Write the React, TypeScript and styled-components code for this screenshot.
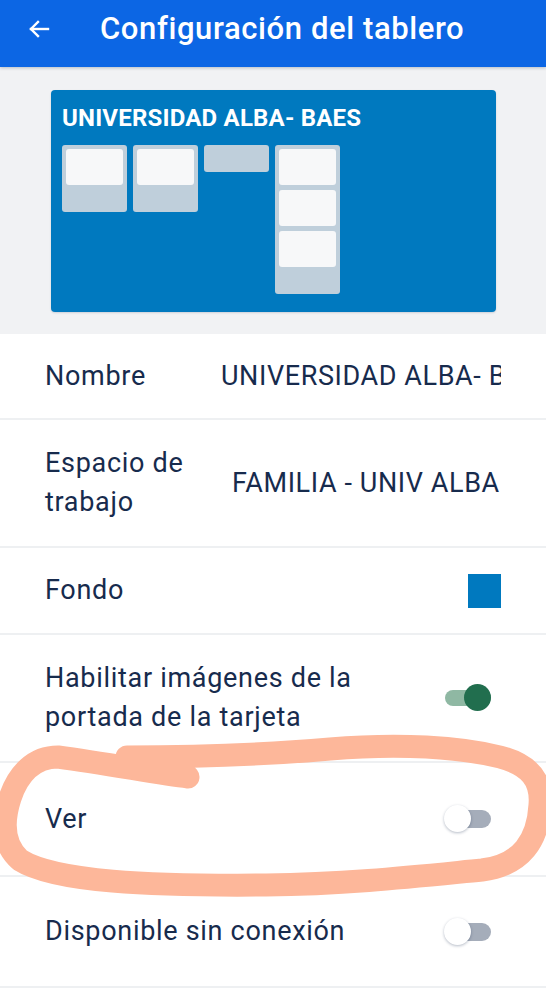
import styled, { createGlobalStyle } from 'styled-components'

const GlobalStyle = createGlobalStyle`
  html, body {
    margin: 0;
    padding: 0;
    background: #ffffff;
    font-family: Roboto, "Noto Sans", "Liberation Sans", sans-serif;
  }
  * { box-sizing: border-box; }
`

const Page = styled.div`
  position: relative;
  width: 546px;
  min-height: 999px;
  background: #ffffff;
  overflow: hidden;
`

const Header = styled.header`
  height: 67px;
  background: #0c66e4;
  display: flex;
  align-items: flex-start;
  padding: 12px 0 0 26px;
  box-shadow: 0 1px 3px rgba(9, 30, 66, 0.25);
  position: relative;
  z-index: 1;
`

const BackButton = styled.button`
  width: 26px;
  height: 34px;
  padding: 0;
  border: none;
  background: none;
  display: flex;
  align-items: center;
  justify-content: center;
  margin-right: 48px;
`

const Title = styled.h1`
  margin: 0;
  color: #ffffff;
  font-size: 31px;
  line-height: 34px;
  font-weight: 500;
  letter-spacing: 0.6px;
`

const PreviewArea = styled.section`
  background: #f1f2f4;
  padding: 23px 50px 22px 51px;
`

const BoardPreview = styled.div`
  height: 222px;
  background: #0079bf;
  border-radius: 4px;
  padding: 15px 11px;
  box-shadow: 0 1px 2px rgba(9, 30, 66, 0.15);
`

const BoardName = styled.div`
  color: #ffffff;
  font-size: 24px;
  line-height: 26px;
  font-weight: 700;
  letter-spacing: 0.2px;
  margin-bottom: 14px;
`

const Lists = styled.div`
  display: flex;
  align-items: flex-start;
  gap: 6px;
`

const MiniList = styled.div<{ $empty?: boolean }>`
  width: 65px;
  height: ${p => (p.$empty ? '27px' : 'auto')};
  background: #bfcfdb;
  border-radius: 3px;
  padding: ${p => (p.$empty ? '0' : '4px 4px 27px')};
  display: flex;
  flex-direction: column;
  gap: 5px;
`

const MiniCard = styled.div`
  height: 36px;
  background: #f7f8f9;
  border-radius: 3px;
`

const Settings = styled.div`
  display: flex;
  flex-direction: column;
`

const Row = styled.div<{ $height: number }>`
  min-height: ${p => p.$height}px;
  display: flex;
  align-items: center;
  padding: 0 45px;
  border-bottom: 2px solid #eef0f2;
  color: #172b4d;
`

const Label = styled.div<{ $width?: number }>`
  font-size: 27px;
  line-height: 39px;
  letter-spacing: 0.7px;
  flex: ${p => (p.$width ? `0 0 ${p.$width}px` : '1')};
`

const Value = styled.div<{ $indent: number }>`
  flex: 1;
  min-width: 0;
  overflow: hidden;
  white-space: nowrap;
  font-size: 27px;
  line-height: 39px;
  letter-spacing: 0.6px;
  padding-left: ${p => p.$indent}px;
`

const Swatch = styled.div`
  width: 33px;
  height: 34px;
  background: #0079bf;
`

const Toggle = styled.div<{ $on?: boolean }>`
  position: relative;
  width: 47px;
  height: 28px;
  flex: 0 0 47px;
  margin-right: 10px;

  &::before {
    content: '';
    position: absolute;
    left: 1px;
    right: 0;
    top: ${p => (p.$on ? '6px' : '5px')};
    height: ${p => (p.$on ? '16px' : '18px')};
    border-radius: 9px;
    background: ${p => (p.$on ? '#8fb8a3' : '#a5adba')};
  }

  &::after {
    content: '';
    position: absolute;
    top: 0;
    left: ${p => (p.$on ? '20px' : '0')};
    width: 27px;
    height: 27px;
    border-radius: 50%;
    background: ${p => (p.$on ? '#216e4e' : '#ffffff')};
    box-shadow: ${p => (p.$on ? 'none' : '0 1px 3px rgba(9, 30, 66, 0.3)')};
  }
`

const Annotation = styled.svg`
  position: absolute;
  left: 0;
  top: 0;
  pointer-events: none;
  z-index: 2;
`

const lists = [1, 1, 0, 3]

export default function App() {
  return (
    <Page>
      <GlobalStyle />
      <Header>
        <BackButton aria-label="Volver">
          <svg width="24" height="24" viewBox="0 0 24 24" fill="none" stroke="#fff" strokeWidth="2.4" strokeLinecap="square">
            <path d="M21 12H4" />
            <path d="M11 5l-7 7 7 7" />
          </svg>
        </BackButton>
        <Title>Configuración del tablero</Title>
      </Header>

      <PreviewArea>
        <BoardPreview>
          <BoardName>UNIVERSIDAD ALBA- BAES</BoardName>
          <Lists>
            {lists.map((n, i) => (
              <MiniList key={i} $empty={n === 0}>
                {Array.from({ length: n }).map((_, j) => (
                  <MiniCard key={j} />
                ))}
              </MiniList>
            ))}
          </Lists>
        </BoardPreview>
      </PreviewArea>

      <Settings>
        <Row $height={86}>
          <Label $width={130}>Nombre</Label>
          <Value $indent={46}>UNIVERSIDAD ALBA- BAES</Value>
        </Row>
        <Row $height={128}>
          <Label $width={150}>Espacio de trabajo</Label>
          <Value $indent={37}>FAMILIA - UNIV ALBA BAES</Value>
        </Row>
        <Row $height={87}>
          <Label>Fondo</Label>
          <Swatch />
        </Row>
        <Row $height={128}>
          <Label>Habilitar imágenes de la portada de la tarjeta</Label>
          <Toggle $on />
        </Row>
        <Row $height={114}>
          <Label>Ver</Label>
          <Toggle />
        </Row>
        <Row $height={111}>
          <Label>Disponible sin conexión</Label>
          <Toggle />
        </Row>
      </Settings>

      <Annotation width="546" height="999" viewBox="0 0 546 999">
        <path
          d="M188 777 C160 774 110 764 58 757 C34 757 18 774 10 798 C2 823 3 845 20 860 C55 882 150 886 266 885 C350 884 420 876 482 870 C522 865 538 840 540 805 C542 780 530 765 500 757 C460 747 400 743 330 749 C250 756 180 757 127 757"
          fill="none"
          stroke="#fdb79a"
          strokeWidth="23"
          strokeLinecap="round"
          strokeLinejoin="round"
        />
      </Annotation>
    </Page>
  )
}
